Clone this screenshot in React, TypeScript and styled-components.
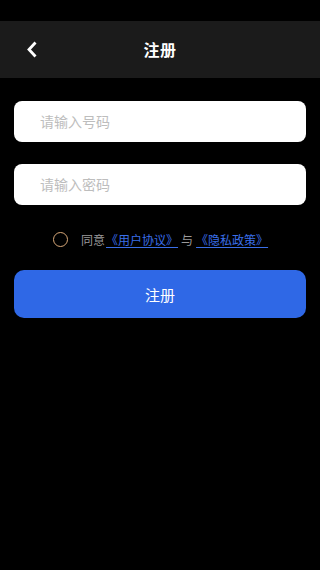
import React from "react";
import styled, { createGlobalStyle } from "styled-components";

const Global = createGlobalStyle`
  html, body { margin: 0; padding: 0; background: #000; }
  body { font-family: "Noto Sans CJK SC", "Noto Sans", sans-serif; }
  * { box-sizing: border-box; }
`;

const Page = styled.div`
  width: 320px;
  height: 570px;
  background: #000;
  padding-top: 21px;
  display: flex;
  flex-direction: column;
`;

const Header = styled.header`
  height: 57px;
  background: #1b1b1b;
  display: flex;
  align-items: center;
  justify-content: center;
  position: relative;
`;

const Back = styled.button`
  position: absolute;
  left: 22px;
  top: 50%;
  transform: translateY(-50%);
  width: 20px;
  height: 24px;
  padding: 0;
  border: 0;
  background: transparent;
  display: flex;
  align-items: center;
  justify-content: center;
`;

const Title = styled.h1`
  margin: 0 0 2px;
  font-size: 16px;
  font-weight: 700;
  color: #fff;
  letter-spacing: 0.5px;
`;

const Body = styled.main`
  padding: 23px 14px 0;
  display: flex;
  flex-direction: column;
`;

const Field = styled.input`
  height: 41px;
  border: 0;
  border-radius: 8px;
  background: #fff;
  padding: 0 0 2px 26px;
  font-family: inherit;
  font-size: 14px;
  color: #333;
  outline: none;
  margin-bottom: ${(p: { $mb: number }) => p.$mb}px;
  &::placeholder { color: #bdbdbd; }
`;

const Agree = styled.div`
  display: flex;
  align-items: center;
  padding-left: 39px;
  height: 22px;
  margin-bottom: 20px;
  font-size: 12px;
  color: #9a9a9a;
  white-space: nowrap;
`;

const Radio = styled.span`
  width: 15px;
  height: 15px;
  border-radius: 50%;
  border: 1.5px solid #d8a878;
  margin-right: 13px;
  flex-shrink: 0;
`;

const Link = styled.a`
  color: #3a6fe8;
  text-decoration: underline;
  text-underline-offset: 2px;
  margin: 0 1px;
`;

const Sep = styled.span`
  margin: 0 2px;
`;

const Submit = styled.button`
  height: 48px;
  border: 0;
  border-radius: 10px;
  background: #2f68e6;
  color: #fff;
  font-family: inherit;
  font-size: 15px;
`;

export default function App() {
  return (
    <Page>
      <Global />
      <Header>
        <Back aria-label="back">
          <svg width="12" height="17" viewBox="0 0 12 17">
            <path d="M9.5 1.5 L3 8.5 L9.5 15.5" fill="none" stroke="#fff" strokeWidth="2.8" strokeLinejoin="miter" />
          </svg>
        </Back>
        <Title>注册</Title>
      </Header>
      <Body>
        <Field $mb={22} placeholder="请输入号码" />
        <Field $mb={23} placeholder="请输入密码" type="password" />
        <Agree>
          <Radio />
          同意<Link>《用户协议》</Link><Sep>与</Sep><Link>《隐私政策》</Link>
        </Agree>
        <Submit>注册</Submit>
      </Body>
    </Page>
  );
}
